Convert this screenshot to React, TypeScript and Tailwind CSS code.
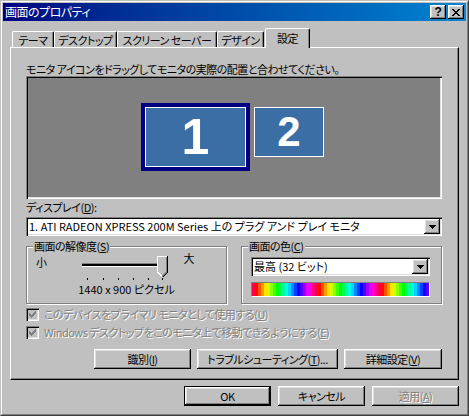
import { FunctionComponent, ReactNode } from 'react';

const raised =
  'bg-[#c0c0c0] shadow-[inset_-1px_-1px_#000,inset_1px_1px_#fff,inset_-2px_-2px_#808080,inset_2px_2px_#dfdfdf]';
const sunken =
  'shadow-[inset_1px_1px_#808080,inset_2px_2px_#000,inset_-1px_-1px_#fff,inset_-2px_-2px_#dfdfdf]';

const U: FunctionComponent<{ children: ReactNode }> = ({ children }) => (
  <span className="underline underline-offset-[1px]">{children}</span>
);

const DownArrow = () => (
  <svg width="7" height="4" viewBox="0 0 7 4" shapeRendering="crispEdges">
    <path d="M0 0h7v1H0zM1 1h5v1H1zM2 2h3v1H2zM3 3h1v1H3z" fill="#000" />
  </svg>
);

const Combo: FunctionComponent<{ text: ReactNode; className: string }> = ({ text, className }) => (
  <div className={`flex bg-white p-[2px] ${sunken} ${className}`}>
    <span className="flex-1 overflow-hidden whitespace-nowrap pl-[1px] leading-[15px] tracking-normal">{text}</span>
    <div className={`flex w-[16px] items-center justify-center ${raised}`}>
      <DownArrow />
    </div>
  </div>
);

const Button: FunctionComponent<{ children: ReactNode; className: string; isDefault?: boolean; disabled?: boolean }> = ({
  children,
  className,
  isDefault,
  disabled,
}) => (
  <div className={`${isDefault ? 'border border-black' : ''} ${className}`}>
    <div
      className={`flex h-full items-center justify-center ${raised} ${
        disabled ? 'text-[#808080] [text-shadow:1px_1px_#fff]' : ''
      }`}
    >
      {children}
    </div>
  </div>
);

const CheckRow: FunctionComponent<{ children: ReactNode }> = ({ children }) => (
  <div className="flex h-[18px] items-center">
    <div className={`flex h-[13px] w-[13px] items-center justify-center bg-[#c0c0c0] ${sunken}`}>
      <svg width="7" height="7" viewBox="0 0 7 7" shapeRendering="crispEdges">
        <path d="M6 0h1v3H6zM5 1h1v3H5zM4 2h1v3H4zM3 3h1v3H3zM2 4h1v3H2zM1 3h1v3H1zM0 2h1v3H0z" fill="#808080" />
      </svg>
    </div>
    <span className="ml-[5px] whitespace-nowrap text-[#808080] [text-shadow:1px_1px_#fff]">{children}</span>
  </div>
);

const tabs = [
  { label: 'テーマ', w: 'w-[42px]' },
  { label: 'デスクトップ', w: 'w-[63px]' },
  { label: 'スクリーン セーバー', w: 'w-[100px]' },
  { label: 'デザイン', w: 'w-[47px]' },
];

const bands = Array.from({ length: 59 }, (_, i) => `hsl(${(345 + ((i * 3) / 63) * 360) % 360}, 100%, 50%)`);

export default function App() {
  return (
    <div className="h-[416px] w-[469px] border border-t-[#c0c0c0] border-l-[#c0c0c0] border-r-[#404040] border-b-[#404040] bg-[#c0c0c0] font-['Noto_Sans_CJK_JP',sans-serif] text-[11px] leading-[14px] tracking-[-0.5px] text-black [font-feature-settings:'palt']">
      <div className="flex h-full flex-col border border-t-white border-l-white border-r-[#808080] border-b-[#808080] p-px">
        {/* title bar */}
        <div className="flex h-[18px] items-center bg-linear-to-r from-[#000080] to-[#1084d0] pl-[2px] pr-[2px]">
          <span className="text-[12px] text-white">画面のプロパティ</span>
          <div className="ml-auto flex gap-[2px]">
            <div className={`flex h-[14px] w-[16px] items-center justify-center ${raised}`}>
              <span className="font-['Liberation_Sans',sans-serif] text-[12px] font-bold leading-[12px]">?</span>
            </div>
            <div className={`flex h-[14px] w-[16px] items-center justify-center ${raised}`}>
              <svg width="8" height="7" viewBox="0 0 8 7" shapeRendering="crispEdges">
                <path d="M0 0h2v1H0zM6 0h2v1H6zM1 1h2v1H1zM5 1h2v1H5zM2 2h4v1H2zM3 3h2v1H3zM2 4h4v1H2zM1 5h2v1H1zM5 5h2v1H5zM0 6h2v1H0zM6 6h2v1H6z" fill="#000" />
              </svg>
            </div>
          </div>
        </div>

        <div className="px-[7px] pt-[7px]">
          {/* tabs */}
          <div className="flex h-[19px] items-end pl-[2px]">
            {tabs.map((t) => (
              <div
                key={t.label}
                className={`flex h-[16px] items-center justify-center whitespace-nowrap rounded-t-[2px] border-l border-t border-r border-l-white border-t-white border-r-black shadow-[inset_-1px_0_#808080] ${t.w}`}
              >
                {t.label}
              </div>
            ))}
            <div className="relative z-10 -mb-px ml-px flex h-[20px] w-[45px] items-start justify-center rounded-t-[2px] border-l border-t border-r border-l-white border-t-white border-r-black bg-[#c0c0c0] pt-[2px] shadow-[inset_-1px_0_#808080]">
              設定
            </div>
          </div>

          {/* panel */}
          <div className="h-[333px] border border-t-white border-l-white border-r-black border-b-black pl-[15px] pr-[16px] pt-[14px] shadow-[inset_-1px_-1px_#808080]">
            <div className="h-[14px] whitespace-nowrap">モニタ アイコンをドラッグしてモニタの実際の配置と合わせてください。</div>

            <div className={`relative h-[123px] bg-[#808080] ${sunken}`}>
              <div className="absolute left-[115px] top-[27px] h-[68px] w-[109px] border-[4px] border-[#000080]">
                <div className="flex h-full items-center justify-center border border-white bg-[#3a6ea5] font-['Liberation_Sans',Arial,sans-serif] text-[50px] font-bold leading-none tracking-normal text-white">
                  1
                </div>
              </div>
              <div className="absolute left-[228px] top-[31px] flex h-[50px] w-[70px] items-center justify-center border border-white bg-[#3a6ea5] font-['Liberation_Sans',Arial,sans-serif] text-[42px] font-bold leading-none tracking-normal text-white">
                2
              </div>
            </div>

            <div className="mt-px">
              ディスプレイ(<U>D</U>):
            </div>
            <Combo
              className="mt-[3px] h-[19px]"
              text="1. ATI RADEON XPRESS 200M Series 上の プラグ アンド プレイ モニタ"
            />

            <div className="mt-[4px] flex justify-between">
              <fieldset className="h-[64px] w-[201px] min-w-0 border border-[#808080] px-0 shadow-[inset_1px_1px_#fff,1px_1px_#fff]">
                <legend className="ml-[6px] bg-[#c0c0c0] px-px leading-[12px]">
                  画面の解像度(<U>S</U>)
                </legend>
                <div className="flex h-[29px] items-start pl-[9px]">
                  <span className="mt-[4px] leading-[13px]">小</span>
                  <svg className="ml-[35px]" width="88" height="29" viewBox="0 0 88 29" shapeRendering="crispEdges">
                    <rect x="0" y="11" width="82" height="1" fill="#808080" />
                    <rect x="0" y="12" width="82" height="2" fill="#000" />
                    <rect x="0" y="14" width="82" height="1" fill="#fff" />
                    <path d="M75 4h10v16l-5 5l-5-5z" fill="#c0c0c0" />
                    <path d="M75.5 20V4.5h9.5" stroke="#fff" fill="none" />
                    <path d="M75.5 20l4.5 4.5" stroke="#fff" fill="none" />
                    <path d="M85.5 4v16.5l-5 5" stroke="#000" fill="none" />
                    <path d="M84.5 5v15l-4.5 4.5" stroke="#808080" fill="none" />
                    {[5, 21, 36, 51, 66, 80].map((x) => (
                      <rect key={x} x={x} y="26" width="1" height="2" fill="#000" />
                    ))}
                  </svg>
                  <span className="ml-[14px] leading-[13px]">大</span>
                </div>
                <div className="mt-px text-center tracking-normal">1440 x 900 ピクセル</div>
              </fieldset>

              <fieldset className="h-[64px] w-[201px] min-w-0 border border-[#808080] px-0 shadow-[inset_1px_1px_#fff,1px_1px_#fff]">
                <legend className="ml-[6px] bg-[#c0c0c0] px-px leading-[12px]">
                  画面の色(<U>C</U>)
                </legend>
                <Combo className="ml-[9px] mt-[5px] h-[19px] w-[179px]" text="最高 (32 ビット)" />
                <div className="ml-[9px] mt-[6px] flex h-[15px] w-[179px] overflow-hidden border border-t-[#808080] border-l-[#808080] border-r-white border-b-white">
                  {bands.map((c, i) => (
                    <div key={i} className="h-full w-[3px] shrink-0" style={{ backgroundColor: c }} />
                  ))}
                </div>
              </fieldset>
            </div>

            <div className="mt-px">
              <CheckRow>
                このデバイスをプライマリ モニタとして使用する(<U>U</U>)
              </CheckRow>
              <CheckRow>
                Windows デスクトップをこのモニタ上で移動できるようにする(<U>E</U>)
              </CheckRow>
            </div>

            <div className="mt-[8px] flex justify-end gap-[6px]">
              <Button className="h-[20px] w-[97px]">
                識別(<U>I</U>)
              </Button>
              <Button className="h-[20px] w-[141px]">
                トラブルシューティング(<U>T</U>)...
              </Button>
              <Button className="h-[20px] w-[98px]">
                詳細設定(<U>V</U>)
              </Button>
            </div>
          </div>

          {/* dialog buttons */}
          <div className="mt-[6px] flex justify-end gap-[7px]">
            <Button className="h-[20px] w-[87px]" isDefault>
              OK
            </Button>
            <Button className="h-[20px] w-[87px]">キャンセル</Button>
            <Button className="h-[20px] w-[87px]" disabled>
              適用(<U>A</U>)
            </Button>
          </div>
        </div>
      </div>
    </div>
  );
}
